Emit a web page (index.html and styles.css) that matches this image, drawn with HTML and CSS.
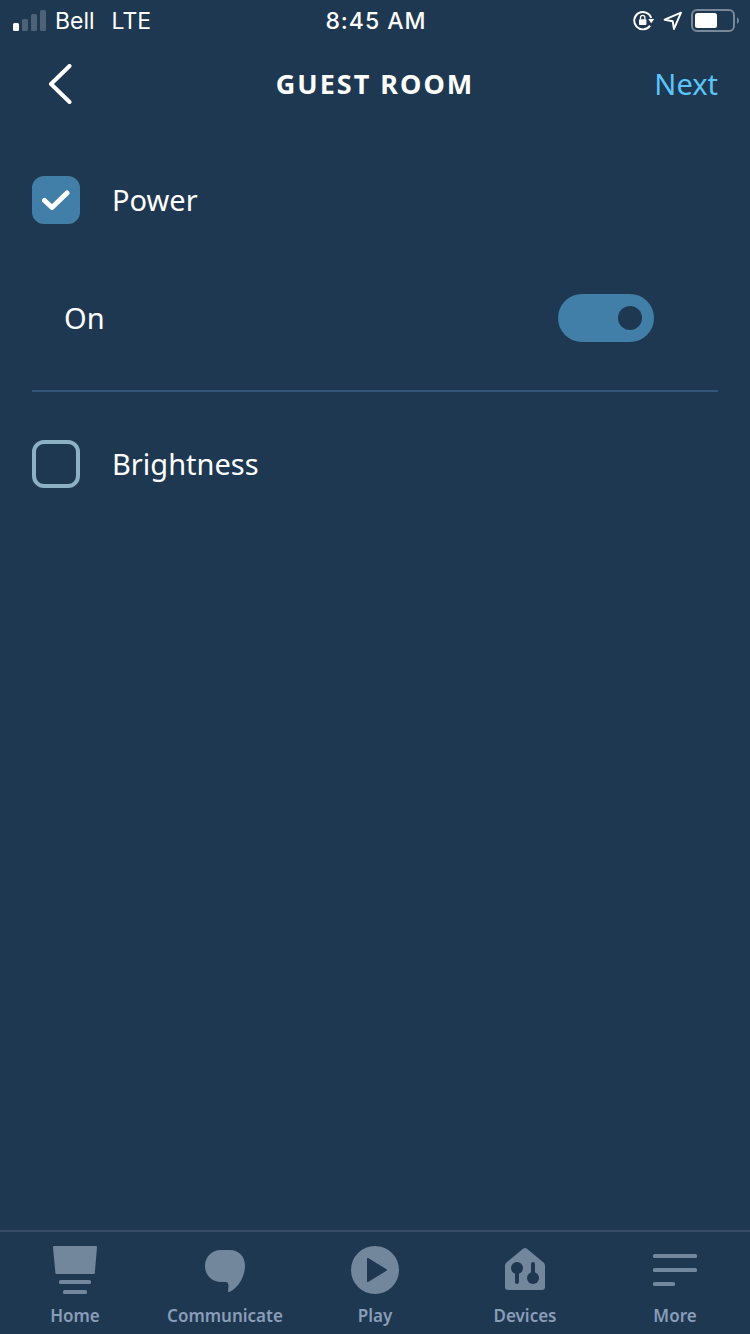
FILE: index.html
```html
<!DOCTYPE html>
<html lang="en">
<head>
<meta charset="utf-8">
<meta name="viewport" content="width=device-width, initial-scale=1">
<title>Guest Room</title>
<link rel="stylesheet" href="styles.css">
</head>
<body>
<div class="app">
  <div class="status">
    <div class="status-left">
      <svg class="signal" width="34" height="22" viewBox="0 0 34 22" aria-hidden="true">
        <rect x="0" y="13" width="6" height="8" rx="1.5" fill="#fff"/>
        <g fill="#4d6277"><rect x="9" y="9" width="6" height="12" rx="1.5"/><rect x="18" y="4" width="6" height="17" rx="1.5"/><rect x="27" y="0" width="6" height="21" rx="1.5"/></g>
      </svg>
      <span>Bell</span>
      <span class="network">LTE</span>
    </div>
    <time class="clock">8:45 AM</time>
    <div class="status-right">
      <svg width="22" height="22" viewBox="0 0 22 22" aria-hidden="true">
        <path d="M17.1 15.6A8.7 8.7 0 1 1 18.2 8" fill="none" stroke="#fff" stroke-width="1.9"/>
        <path d="M15.2 9h6l-3 4.2z" fill="#fff"/>
        <rect x="6" y="9.3" width="7.4" height="5.8" rx=".8" fill="#fff"/>
        <path d="M7.5 9.6V7.5a2.2 2.2 0 0 1 4.4 0v2.1" fill="none" stroke="#fff" stroke-width="1.3"/>
      </svg>
      <svg width="20" height="20" viewBox="0 0 20 20" aria-hidden="true">
        <path d="M1.600 8.700 18 1.700 10.900 18 9.700 10.200z" fill="none" stroke="#fff" stroke-width="1.900" stroke-linejoin="round"/>
      </svg>
      <svg width="48" height="24" viewBox="0 0 48 24" aria-hidden="true">
        <rect x="1" y="1" width="42" height="21" rx="5" fill="none" stroke="#798898" stroke-width="2"/>
        <rect x="4" y="4" width="22" height="15" rx="2.500" fill="#fff"/>
        <path d="M46 8q2 1.500 2 3.500t-2 3.500z" fill="#798898"/>
      </svg>
    </div>
  </div>

  <header class="header">
    <button class="back" type="button" aria-label="Back">
      <svg width="24" height="40" viewBox="0 0 24 40" aria-hidden="true"><path d="M21.500 2 3 20 21.500 38" fill="none" stroke="#fff" stroke-width="4" stroke-linecap="round" stroke-linejoin="round"/></svg>
    </button>
    <h1 class="title">GUEST ROOM</h1>
    <button class="next" type="button">Next</button>
  </header>

  <main class="content">
    <section class="setting">
      <label class="option">
        <span class="check">
          <input class="box" type="checkbox" checked>
          <svg class="tick" width="30" height="22" viewBox="0 0 30 22" aria-hidden="true"><path d="M3.500 11.500 11 18.500 26 4" fill="none" stroke="#fff" stroke-width="5" stroke-linecap="round" stroke-linejoin="round"/></svg>
        </span>
        <span>Power</span>
      </label>
      <label class="power-state">
        <span>On</span>
        <input class="switch" type="checkbox" role="switch" checked>
      </label>
    </section>
    <section class="setting">
      <label class="option">
        <span class="check"><input class="box" type="checkbox"></span>
        <span>Brightness</span>
      </label>
    </section>
  </main>

  <nav class="tabs">
    <a class="tab" href="#home">
      <svg width="48" height="48" viewBox="0 0 48 48" aria-hidden="true"><path d="M3 0h42q1 0 1 1l-2.200 26q-.1 1-1 1H5.500q-1 0-1.100-1L2 1q0-1 1-1z"/><rect x="8" y="34" width="32" height="4" rx="1.500"/><rect x="12" y="44" width="24" height="4" rx="1.500"/></svg>
      <span>Home</span>
    </a>
    <a class="tab" href="#communicate">
      <svg width="48" height="48" viewBox="0 0 48 48" aria-hidden="true"><path d="M20 4h9C38 4 44 11 44 19.500 44 30 38 41 29 45.700c-1 .5-2 .3-2-.7 0-2 .8-4 .3-6.500-.3-1.700-1-2.500-2.500-2.500H20C10.500 36 4 29 4 20S10.500 4 20 4z"/></svg>
      <span>Communicate</span>
    </a>
    <a class="tab" href="#play">
      <svg width="48" height="48" viewBox="0 0 48 48" aria-hidden="true"><path fill-rule="evenodd" d="M24 0a24 24 0 1 1 0 48 24 24 0 0 1 0-48zM16 12.800v22.400q0 1.300 1.100.7L35.500 24.700q.9-.7 0-1.400L17.100 12.100q-1.100-.6-1.100.7z"/></svg>
      <span>Play</span>
    </a>
    <a class="tab" href="#devices">
      <svg width="48" height="48" viewBox="0 0 48 48" aria-hidden="true"><path d="M22.300 2.600q1.700-1.200 3.400 0L42.500 16.500q1.500 1.300 1.500 3V41q0 3-3 3H7q-3 0-3-3V19.500q0-1.700 1.500-3z"/><g class="cutout"><circle cx="16" cy="22" r="6"/><rect x="14" y="22" width="4" height="16" rx="2"/><circle cx="32" cy="32" r="6"/><rect x="30" y="16" width="4" height="16" rx="2"/></g></svg>
      <span>Devices</span>
    </a>
    <a class="tab" href="#more">
      <svg width="48" height="48" viewBox="0 0 48 48" aria-hidden="true"><rect x="2" y="8" width="44" height="4" rx="1.500"/><rect x="2" y="22" width="44" height="4" rx="1.500"/><rect x="2" y="36" width="22" height="4" rx="1.500"/></svg>
      <span>More</span>
    </a>
  </nav>
</div>
</body>
</html>
```
FILE: styles.css
```css
* { box-sizing: border-box; }

body {
  margin: 0;
  background: #1f3851;
  color: #fff;
  font-family: "Noto Sans", "Open Sans", sans-serif;
  font-size: 29px;
  line-height: 40px;
}

svg { display: block; flex: none; }

button {
  border: 0;
  padding: 0;
  background: none;
  color: inherit;
  font: inherit;
  cursor: pointer;
}

.app {
  display: flex;
  flex-direction: column;
  min-height: 100vh;
}

.status {
  display: grid;
  grid-template-columns: 1fr auto 1fr;
  align-items: center;
  height: 40px;
  padding: 1px 11px 0 13px;
  font-family: Inter, Roboto, sans-serif;
  font-size: 23px;
}

.status-left,
.status-right {
  display: flex;
  align-items: center;
}

.signal { margin-right: 8px; }
.network { margin-left: 17px; }

.clock {
  font-weight: 500;
  letter-spacing: 1px;
}

.status-right {
  justify-content: flex-end;
  gap: 8px;
}

.header {
  display: grid;
  grid-template-columns: 1fr auto 1fr;
  align-items: center;
  height: 88px;
  padding: 0 32px;
}

.back {
  justify-self: start;
  margin-left: 16px;
}

.title {
  margin: 0;
  font-size: 27px;
  font-weight: 700;
  letter-spacing: 2px;
}

.next {
  justify-self: end;
  color: #5bc5fa;
}

.content {
  flex: 1;
  padding: 0 32px;
}

.setting { padding: 48px 0; }

.setting + .setting { border-top: 2px solid #34557a; }

.option {
  display: flex;
  align-items: center;
  gap: 32px;
}

.check {
  display: grid;
  place-items: center;
}

.check > * { grid-area: 1 / 1; }

.box {
  appearance: none;
  width: 48px;
  height: 48px;
  margin: 0;
  border: 4px solid #8cb1c5;
  border-radius: 12px;
}

.box:checked {
  border-color: #417ea8;
  background: #417ea8;
}

.tick { pointer-events: none; }

.box:not(:checked) + .tick { visibility: hidden; }

.power-state {
  display: flex;
  align-items: center;
  justify-content: space-between;
  margin-top: 70px;
  padding: 0 64px 0 32px;
}

.switch {
  appearance: none;
  display: flex;
  align-items: center;
  width: 96px;
  height: 48px;
  margin: 0;
  padding: 0 12px;
  border-radius: 24px;
  background: #417ea8;
}

.switch::before {
  content: "";
  width: 24px;
  height: 24px;
  border-radius: 50%;
  background: #1f3851;
}

.switch:checked { justify-content: flex-end; }

.tabs {
  display: grid;
  grid-template-columns: repeat(5, 1fr);
  padding: 14px 0 6px;
  border-top: 2px solid #364d65;
}

.tab {
  display: flex;
  flex-direction: column;
  align-items: center;
  gap: 10px;
  color: #899db8;
  font-size: 17px;
  font-weight: 600;
  line-height: 24px;
  text-decoration: none;
}

.tab svg { fill: #72879c; }

.tab .cutout { fill: #1f3851; }
```
